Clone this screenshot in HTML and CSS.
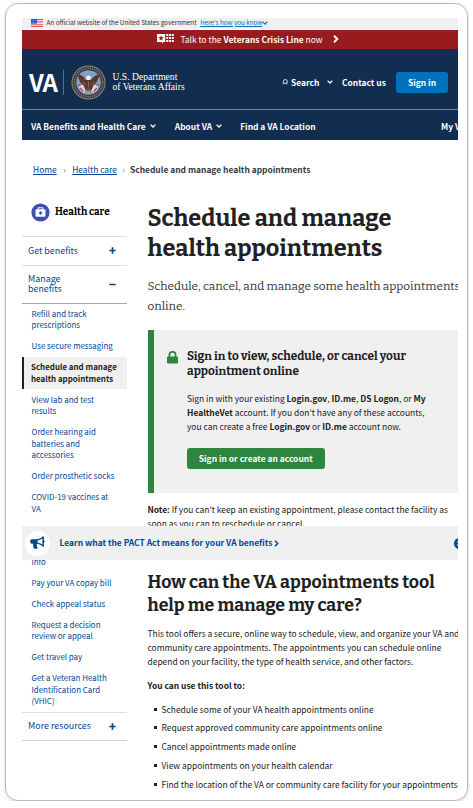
FILE: index.html
```html
<!DOCTYPE html>
<html lang="en">
<head>
<meta charset="utf-8">
<title>Schedule and manage health appointments</title>
<link rel="stylesheet" href="styles.css">
</head>
<body>
<div class="card">
<div class="screen">
  <div class="gov">
    <svg class="flag" viewBox="0 0 12 8"><rect width="12" height="8" fill="#fff"/><path d="M0 .6h12M0 2.9h12M0 5.2h12M0 7.4h12" stroke="#e0505a" stroke-width="1.1"/><rect width="6" height="4.6" fill="#3a50c8"/><path d="M1 1.3h4M1 3h4" stroke="#a9b4ee" stroke-width=".5" stroke-dasharray=".6 .5"/></svg>
    <span>An official website of the United States government</span>
    <a class="how" href="#">Here's how you know</a>
    <svg class="how-chev" viewBox="0 0 6 4"><path d="M.5.6 3 3.2 5.5.6" fill="none" stroke="#0071bb" stroke-width="1.1"/></svg>
  </div>
  <div class="crisis">
    <svg class="crisis-icon" viewBox="0 0 17 10"><path d="M0 0h8.2v8H6.400L5 9.800V8H0z" fill="#fff"/><path d="M4.100 1.400l.8 1.700 1.800.2-1.400 1.300.4 1.800-1.600-.9-1.600.9.4-1.800L1.500 3.300l1.800-.2z" fill="#981b1e"/><path d="M9.300 1h7.500M9.300 4h7.500M9.300 7h7.500" stroke="#fff" stroke-width="1.900" stroke-dasharray="2 .8"/></svg>
    <span>Talk to the <b>Veterans Crisis Line</b> now</span>
    <svg class="crisis-chev" viewBox="0 0 6 8"><path d="M1 .8 4.300 4 1 7.200" fill="none" stroke="#fff" stroke-width="1.900"/></svg>
  </div>
  <header class="head">
    <span class="va">VA</span>
    <span class="rule"></span>
    <svg class="seal" viewBox="0 0 36 36"><circle cx="18" cy="18" r="17.500" fill="#a58a5c"/><circle cx="18" cy="18" r="16.500" fill="#26365a"/><circle cx="18" cy="18" r="14.600" fill="none" stroke="#8d8878" stroke-width="1.600" stroke-dasharray="1.100 .9"/><circle cx="18" cy="18" r="12.600" fill="#b89a62"/><circle cx="18" cy="18" r="12" fill="#7f9fce"/><path d="M7 20h22a12 12 0 0 1-22 0z" fill="#4a66a0"/><path d="M8 22l5-3 3 6-3 4a12 12 0 0 1-5-7zM28 22l-5-3-3 6 3 4a12 12 0 0 0 5-7z" fill="#d9d3dc"/><path d="M9.500 23.500l3 4M26.500 23.500l-3 4" stroke="#b53a4c" stroke-width="1.300"/><path d="M7 9.500c3 .5 6 2 8.500 5.500l1.500-2.500c1-1 3-.8 3 .8l1 1.700c2-3 5-5 8-5.500-.5 6-3 9.500-6 11.500l-2 5-3-2-3 2-2-5c-3-2-5.500-5.500-6-11.500z" fill="#58382c"/><path d="M15.500 12.500c1-2 4.500-2 5 0l-.5 3h-4z" fill="#f3efe9"/><path d="M15.500 13.500l-2 .8 2 .8z" fill="#e5b13a"/><path d="M12 18l3 2M24 18l-3 2M18 17v6" stroke="#9a6e4c" stroke-width="1"/><path d="M15 27h6l-3 3z" fill="#c79b43"/></svg>
    <span class="dept">U.S. Department<br>of Veterans Affairs</span>
    <svg class="mag" viewBox="0 0 6 6"><circle cx="3.300" cy="2.500" r="2" fill="none" stroke="#fff" stroke-width=".8"/><path d="M1.900 3.900.4 5.400M4.800 3.500v1.800" stroke="#fff" stroke-width=".8"/></svg>
    <b class="search">Search</b>
    <svg class="chev s" viewBox="0 0 6 4"><path d="M.6.6 3 3 5.400.6" fill="none" stroke="#fff" stroke-width="1.300"/></svg>
    <b class="contact">Contact us</b>
    <a class="signin" href="#">Sign in</a>
  </header>
  <nav class="nav">
    <b>VA Benefits and Health Care</b><svg class="chev" viewBox="0 0 6 4"><path d="M.6.6 3 3 5.400.6" fill="none" stroke="#fff" stroke-width="1.300"/></svg>
    <b class="about">About VA</b><svg class="chev" viewBox="0 0 6 4"><path d="M.6.6 3 3 5.400.6" fill="none" stroke="#fff" stroke-width="1.300"/></svg>
    <b class="find">Find a VA Location</b>
    <b class="my">My VA</b>
  </nav>
  <div class="crumbs"><a href="#">Home</a><i>›</i><a href="#">Health care</a><i class="second">›</i><b>Schedule and manage health appointments</b></div>
  <div class="cols">
    <aside class="side">
      <div class="side-head">
        <svg class="kit" viewBox="0 0 20 20"><circle cx="10" cy="10" r="9.600" fill="#3e50b0"/><path d="M7.500 7V5.600c0-.4.300-.6.600-.6h3.800c.3 0 .6.200.6.600V7" fill="none" stroke="#fff" stroke-width="1.100"/><rect x="4.800" y="6.500" width="10.400" height="8" rx="1" fill="#fff"/><path d="M10 8.700v3.600M8.200 10.500h3.600" stroke="#3e50b0" stroke-width="1.400"/></svg>
        <span>Health care</span>
      </div>
      <div class="group get"><span>Get benefits</span><svg viewBox="0 0 7 7"><path d="M3.500.3v6.400M.3 3.500h6.400" stroke="#004795" stroke-width="1.700"/></svg></div>
      <div class="group manage"><span>Manage<br>benefits</span><svg viewBox="0 0 7 7"><path d="M.3 3.500h6.400" stroke="#004795" stroke-width="1.500"/></svg></div>
      <ul class="links">
        <li>Refill and track<br>prescriptions</li>
        <li>Use secure messaging</li>
        <li class="active">Schedule and manage<br>health appointments</li>
        <li>View lab and test<br>results</li>
        <li>Order hearing aid<br>batteries and<br>accessories</li>
        <li>Order prosthetic socks</li>
        <li>COVID-19 vaccines at<br>VA</li>
        <li class="info">info</li>
        <li>Pay your VA copay bill</li>
        <li>Check appeal status</li>
        <li>Request a decision<br>review or appeal</li>
        <li>Get travel pay</li>
        <li>Get a Veteran Health<br>Identification Card<br>(VHIC)</li>
      </ul>
      <div class="group more"><span>More resources</span><svg viewBox="0 0 7 7"><path d="M3.500.3v6.400M.3 3.500h6.400" stroke="#004795" stroke-width="1.700"/></svg></div>
    </aside>
    <main class="main">
      <h1>Schedule and manage<br>health appointments</h1>
      <p class="intro">Schedule, cancel, and manage some health appointments<br>online.</p>
      <section class="alert">
        <svg class="lock" viewBox="0 0 11 13"><path d="M2.400 6V3.900a3.100 3.100 0 0 1 6.200 0V6" fill="none" stroke="#2e8540" stroke-width="1.700"/><rect y="5.600" width="11" height="6.900" rx="1" fill="#2e8540"/></svg>
        <div>
          <h3>Sign in to view, schedule, or cancel your<br>appointment online</h3>
          <p>Sign in with your existing <b>Login.gov</b>, <b>ID.me</b>, <b>DS Logon</b>, or <b>My<br>HealtheVet</b> account. If you don't have any of these accounts,<br>you can create a free <b>Login.gov</b> or <b>ID.me</b> account now.</p>
          <a class="button" href="#">Sign in or create an account</a>
        </div>
      </section>
      <p class="note"><b>Note:</b> If you can't keep an existing appointment, please contact the facility as<br>soon as you can to reschedule or cancel.</p>
      <h2>How can the VA appointments tool<br>help me manage my care?</h2>
      <p class="tool">This tool offers a secure, online way to schedule, view, and organize your VA and<br>community care appointments. The appointments you can schedule online<br>depend on your facility, the type of health service, and other factors.</p>
      <p class="use"><b>You can use this tool to:</b></p>
      <ul class="list">
        <li>Schedule some of your VA health appointments online</li>
        <li>Request approved community care appointments online</li>
        <li>Cancel appointments made online</li>
        <li>View appointments on your health calendar</li>
        <li>Find the location of the VA or community care facility for your appointments</li>
      </ul>
    </main>
  </div>
  <div class="promo">
    <span class="horn"><svg viewBox="0 0 15 14"><path d="M.3 4.300 1.300 3.300H6C8.500 3.300 11 2 13 .3c.5-.3.9 0 .9.400v3.500c1 .4 1 2.200 0 2.600v3.500c0 .5-.5.700-.9.400C11 9 9 8 7 7.800c-.6.600-.4 1.500.1 2-.4.600-.1 1.300.7 1.900-.8 1.400-3 1.400-4 .7-.3-1.500-1-3-.6-4.700H1.300L.3 6.700z" fill="#004795"/><path d="M12.400 2.500v6C10.800 7.400 9.200 6.700 7.600 6.500v-2c1.600-.2 3.200-.9 4.800-2z" fill="#fff"/></svg></span>
    <b>Learn what the PACT Act means for your VA benefits</b>
    <svg class="promo-chev" viewBox="0 0 5 7"><path d="M1 .7 3.700 3.500 1 6.300" fill="none" stroke="#004795" stroke-width="1.500"/></svg>
    <svg class="close" viewBox="0 0 11 11"><circle cx="5.500" cy="5.500" r="5.500" fill="#004795"/><path d="M3.500 3.500l4 4M7.500 3.500l-4 4" stroke="#fff" stroke-width="1.400"/></svg>
  </div>
</div>
</div>
</body>
</html>
```
FILE: styles.css
```css
* { box-sizing: border-box; }
body { margin: 0; background: #fff; color: #212121; font: 8.43px/14.1px "Noto Sans CJK SC", "Noto Sans", sans-serif; white-space: nowrap; overflow: hidden; }
h1, h2, h3, p, ul { margin: 0; padding: 0; }
ul { list-style: none; }
svg { display: block; flex: none; }
a { color: #004795; }
.card { width: 463px; height: 798px; margin: 3px 0 0 5px; padding: 14px 0 0 16px; border: 1px solid #b9b9b9; border-radius: 13px; box-shadow: 0 1px 3px rgba(0,0,0,.18); }
.screen { position: relative; width: 436px; height: 782px; overflow: hidden; }

.gov { display: flex; align-items: center; height: 12px; padding: 0 0 1.5px 9px; background: #f0f0f0; border-bottom: 1px solid #fff; font-size: 6.34px; color: #333; }
.flag { width: 12px; height: 8px; margin: 1px 3.5px 0 0; }
.how { margin-left: 3.5px; font-size: 6.28px; color: #0071bb; }
.how-chev { width: 6px; height: 4px; }
.crisis { display: flex; align-items: center; height: 19px; padding: 0 0 1px 135px; background: #981b1e; color: #fff; }
.crisis-icon { width: 17px; height: 10px; margin-right: 6.5px; }
.crisis-chev { width: 6px; height: 8px; margin-left: 10px; }
.head { display: flex; align-items: center; height: 61px; padding: 6px 0 0 7px; background: #112e51; color: #fff; border-bottom: 1px solid #7284a0; }
.va { flex: none; width: 28px; font: 700 24px/24px "Noto Sans CJK SC", sans-serif; letter-spacing: -.8px; }
.rule { flex: none; width: 1px; height: 25px; margin-left: 6px; background: #596d88; }
.seal { width: 35px; height: 35px; margin-left: 7px; }
.dept { flex: none; width: 76px; margin: 0 0 1px 6.500px; font: 9.62px/9.5px "Liberation Serif", serif; }
.mag { width: 6px; height: 6px; margin-left: 93.5px; }
.search { flex: none; width: 28px; margin-left: 3px; }
.chev { width: 6px; height: 4px; margin-left: 4px; }
.chev.s { margin-left: 7.5px; }
.contact { flex: none; width: 44px; margin-left: 9.5px; }
.signin { flex: none; width: 52px; margin-left: 10px; border-radius: 3px; background: #0071bb; color: #fff; font-weight: 700; line-height: 21px; text-align: center; text-decoration: none; }
.nav { display: flex; align-items: center; height: 30px; padding: 2px 0 0 9px; background: #112e51; color: #fff; }
.about { margin-left: 19px; }
.find { margin-left: 18px; }
.my { margin-left: 125.500px; }

.crumbs { display: flex; align-items: center; height: 60px; padding: 0 0 1px 11px; color: #323a45; }
.crumbs i { width: 15.5px; font-style: normal; text-align: center; color: #5b616b; }
.crumbs i.second { width: 13px; }
.cols { display: flex; align-items: flex-start; }

.side { width: 105px; flex: none; color: #004795; font-size: 7.93px; line-height: 11.5px; }
.side-head { display: flex; align-items: center; gap: 5px; height: 36px; margin-left: 9px; padding-bottom: 12px; color: #000; font: 700 10px/12px Bitter, "DejaVu Serif Condensed", serif; }
.kit { width: 19px; height: 19px; }
.group { display: flex; align-items: center; justify-content: space-between; padding: 0 11.5px 0 6px; border-top: 1px solid #dedede; font-size: 8.92px; line-height: 9.8px; }
.group svg { width: 7px; height: 7px; }
.get { height: 28.5px; }
.manage { height: 39px; border-bottom: 1px solid #a5a5a5; }
.links li { padding: 4.1px 0 5.4px 9.500px; }
.links .active { border-left: 2.5px solid #212121; padding-left: 7px; background: #f0f0f0; color: #212121; font-weight: 700; }
.links .info { padding-top: 36.4px; }
.more { height: 29px; padding-bottom: 1px; border-bottom: 1px solid #cfcfcf; }

.main { margin: 2.8px 0 0 20.500px; }
h1, h2, h3, .intro { font-family: Bitter, "DejaVu Serif Condensed", serif; }
h1 { font-size: 23.5px; line-height: 30.6px; }
.intro { margin-top: 12px; font-size: 11.75px; line-height: 20px; color: #323232; }
.alert { display: flex; width: 320px; height: 163px; margin-top: 14px; padding: 19.1px 0 0 13.5px; border-left: 6px solid #2e8540; background: #f0f0f0; }
.lock { width: 11px; height: 13px; margin: 2px 9px 0 0; }
h3 { font-size: 11.82px; line-height: 15.3px; }
.alert p { margin-top: 11.5px; }
.button { display: block; width: 137.500px; margin-top: 14.3px; border-radius: 3px; background: #2e8540; color: #fff; font-weight: 700; line-height: 21px; text-align: center; text-decoration: none; }
.note { margin-top: 8.8px; }
h2 { margin-top: 40.8px; font-size: 17.66px; line-height: 23.2px; }
.tool { margin-top: 8.6px; }
.use { margin-top: 9.7px; }
.list { margin-top: 7.3px; }
.list li { display: flex; align-items: center; height: 18.9px; }
.list li::before { content: ""; width: 3px; height: 3px; margin: 1px 5px 0 6px; background: #212121; }

.promo { position: absolute; left: 0; top: 508px; display: flex; align-items: center; width: 443px; height: 34px; background: #f0f0f0; color: #004795; }
.promo b { margin-bottom: 1px; }
.horn { display: flex; flex: none; align-items: center; justify-content: center; width: 25px; height: 25px; margin: 0 9.500px 0 3px; border-radius: 50%; background: #fff; }
.horn svg { width: 15px; height: 14px; }
.promo-chev { width: 5px; height: 7px; margin-left: 2px; }
.close { width: 11px; height: 11px; margin-left: 174.500px; }
```
